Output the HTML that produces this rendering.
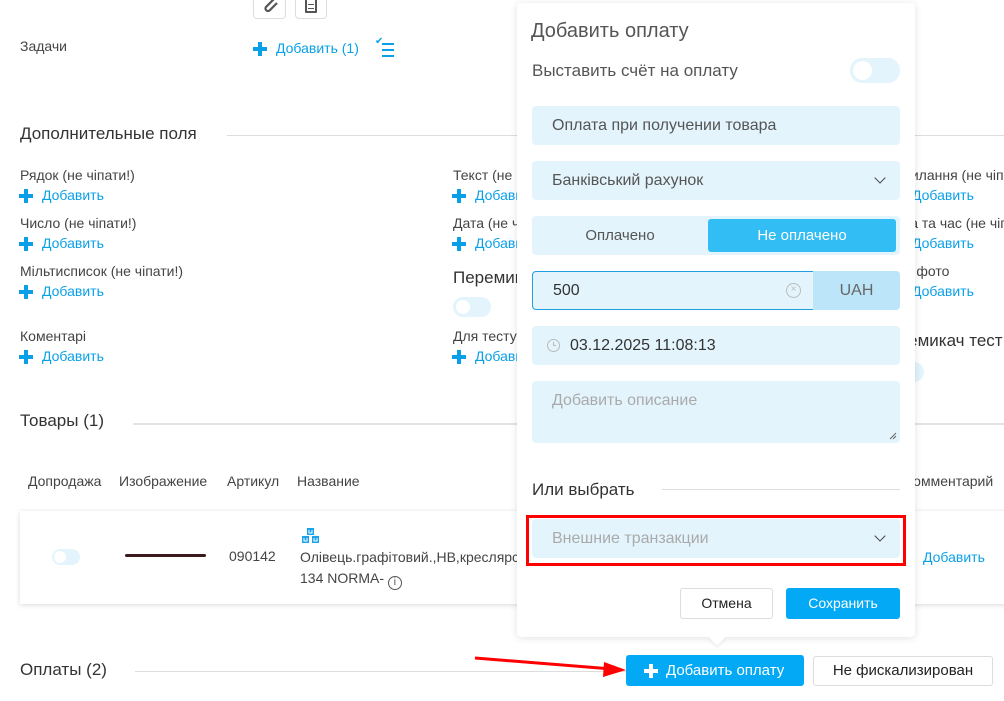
<!DOCTYPE html>
<html><head><meta charset="utf-8"><style>
*{box-sizing:border-box;margin:0;padding:0}
body{width:1004px;height:701px;overflow:hidden;background:#fff;font-family:"Liberation Sans",sans-serif;color:#444;position:relative;font-size:14px}
.a{position:absolute;white-space:nowrap}
.lbl{font-size:14px;color:#444}
.add{font-size:14px;color:#0aa0e8}
.plus{position:absolute;width:14px;height:14px}
.plus:before{content:"";position:absolute;left:5px;top:0;width:4px;height:14px;background:#0aa0e8}
.plus:after{content:"";position:absolute;left:0;top:5px;width:14px;height:4px;background:#0aa0e8}
.h{font-size:17px;color:#333}
.line{position:absolute;height:1px;background:#ddd}
.tog{position:absolute;border-radius:12px;background:#e3f4fd}
.tog i{position:absolute;border-radius:50%;background:#fff}
.pop{position:absolute;left:517px;top:3px;width:398px;height:634px;background:#fff;border-radius:4px;box-shadow:0 1px 8px rgba(0,0,0,.12);z-index:5}
.f{position:absolute;left:15px;width:368px;height:39px;background:#e3f4fd;border-radius:4px;font-size:16px;color:#555;padding:0 0 0 20px;line-height:39px}
.chev{position:absolute;right:16px;top:13px;width:8px;height:8px;border-right:1.3px solid #444;border-bottom:1.3px solid #444;transform:rotate(45deg)}
</style></head><body>
<div class="a" style="left:253px;top:-8px;width:33px;height:27px;border:1px solid #ddd;border-radius:4px"></div>
<svg class="a" style="left:259px;top:-6px" width="22" height="22" viewBox="0 0 22 22"><path d="M16 4 L7 13 a2.5 2.5 0 0 0 3.5 3.5 L18 9" fill="none" stroke="#555" stroke-width="2.2"/></svg>
<div class="a" style="left:295px;top:-8px;width:32px;height:27px;border:1px solid #ddd;border-radius:4px"></div>
<div class="a" style="left:305px;top:-4px;width:12px;height:17px;border:2px solid #555;border-radius:1px"></div>
<div class="a" style="left:308px;top:4px;width:6px;height:5px;border-top:1.5px solid #555;border-bottom:1.5px solid #555"></div>

<div class="a lbl" style="left:20px;top:38px">Задачи</div>
<div class="plus" style="left:253px;top:42px"></div>
<div class="a add" style="left:276px;top:40px">Добавить (1)</div>
<div class="a" style="left:375px;top:36px;color:#0aa0e8;font-size:10px">✔</div>
<div class="a" style="left:382px;top:43px;width:12px;height:14px;border-top:2px solid #0aa0e8;border-bottom:2px solid #0aa0e8"></div>
<div class="a" style="left:382px;top:49px;width:12px;height:2px;background:#0aa0e8"></div>

<div class="a h" style="left:20px;top:124px">Дополнительные поля</div>
<div class="line" style="left:227px;top:135px;width:777px"></div>

<div class="a lbl" style="left:20px;top:167px">Рядок (не чіпати!)</div>
<div class="plus" style="left:19px;top:189px"></div><div class="a add" style="left:42px;top:187px">Добавить</div>
<div class="a lbl" style="left:20px;top:215px">Число (не чіпати!)</div>
<div class="plus" style="left:19px;top:237px"></div><div class="a add" style="left:42px;top:235px">Добавить</div>
<div class="a lbl" style="left:20px;top:263px">Мільтисписок (не чіпати!)</div>
<div class="plus" style="left:19px;top:285px"></div><div class="a add" style="left:42px;top:283px">Добавить</div>
<div class="a lbl" style="left:20px;top:328px">Коментарі</div>
<div class="plus" style="left:19px;top:350px"></div><div class="a add" style="left:42px;top:348px">Добавить</div>

<div class="a lbl" style="left:453px;top:167px">Текст (не чіпати!)</div>
<div class="plus" style="left:452px;top:189px"></div><div class="a add" style="left:475px;top:187px">Добавить</div>
<div class="a lbl" style="left:453px;top:215px">Дата (не чіпати!)</div>
<div class="plus" style="left:452px;top:237px"></div><div class="a add" style="left:475px;top:235px">Добавить</div>
<div class="a h" style="left:453px;top:268px">Перемикач</div>
<div class="tog" style="left:453px;top:297px;width:38px;height:20px"><i style="left:3px;top:3px;width:14px;height:14px"></i></div>
<div class="a lbl" style="left:453px;top:328px">Для тесту</div>
<div class="plus" style="left:452px;top:350px"></div><div class="a add" style="left:475px;top:348px">Добавить</div>

<div class="a lbl" style="left:886px;top:167px">Посилання (не чіпати!)</div>
<div class="a add" style="left:912px;top:187px">Добавить</div>
<div class="a lbl" style="left:887px;top:215px">Дата та час (не чіпати!)</div>
<div class="a add" style="left:912px;top:235px">Добавить</div>
<div class="a lbl" style="left:889px;top:263px">Мої фото</div>
<div class="a add" style="left:912px;top:283px">Добавить</div>
<div class="a h" style="left:877px;top:331px">Перемикач тест</div>
<div class="tog" style="left:886px;top:362px;width:38px;height:20px"></div>

<div class="a h" style="left:20px;top:411px">Товары (1)</div>
<div class="line" style="left:133px;top:423px;width:871px;height:2px;background:#e3e3e3"></div>

<div class="a lbl" style="left:28px;top:473px">Допродажа</div>
<div class="a lbl" style="left:119px;top:473px">Изображение</div>
<div class="a lbl" style="left:227px;top:473px">Артикул</div>
<div class="a lbl" style="left:297px;top:473px">Название</div>
<div class="a lbl" style="left:905px;top:473px">Комментарий</div>

<div class="a" style="left:20px;top:511px;width:1000px;height:93px;background:#fff;box-shadow:0 1px 5px rgba(0,0,0,.15)"></div>
<div class="tog" style="left:52px;top:549px;width:28px;height:16px"><i style="left:2px;top:2px;width:12px;height:12px"></i></div>
<div class="a" style="left:125px;top:554px;width:81px;height:3px;background:#3a1a1a;border-radius:2px"></div>
<div class="a" style="left:229px;top:548px;font-size:14px;color:#444">090142</div>
<svg class="a" style="left:301px;top:527px" width="20" height="18" viewBox="0 0 20 18"><rect x="6" y="1" width="7" height="7" fill="#1aa3ec"/><rect x="1" y="9" width="7" height="7" fill="#1aa3ec"/><rect x="11" y="9" width="7" height="7" fill="#1aa3ec"/><path d="M8 3v3h3V3M3 11v3h3v-3M13 11v3h3v-3" fill="none" stroke="#fff" stroke-width="1"/></svg>
<div class="a lbl" style="left:300px;top:549px">Олівець.графітовий.,НВ,креслярський</div>
<div class="a lbl" style="left:300px;top:570px">134 NORMA- <span style="display:inline-block;width:14px;height:14px;border:1.3px solid #555;border-radius:50%;font-size:10px;text-align:center;line-height:12px;vertical-align:-2px">i</span></div>
<div class="a add" style="left:923px;top:549px">Добавить</div>

<div class="a h" style="left:20px;top:660px">Оплаты (2)</div>
<div class="line" style="left:135px;top:671px;width:491px"></div>

<div class="a" style="left:626px;top:655px;width:178px;height:31px;background:#03a9f4;border-radius:3px;color:#fff;font-size:15px;line-height:31px;padding-left:40px">Добавить оплату</div>
<div class="a" style="left:644px;top:664px;width:14px;height:14px"><div style="position:absolute;left:5px;top:0;width:4px;height:14px;background:#fff"></div><div style="position:absolute;left:0;top:5px;width:14px;height:4px;background:#fff"></div></div>
<div class="a" style="left:813px;top:656px;width:180px;height:30px;border:1px solid #ddd;border-radius:3px;color:#222;font-size:15px;line-height:28px;text-align:center">Не фискализирован</div>

<svg class="a" style="left:0;top:0;z-index:6" width="1004" height="701"><line x1="475" y1="658" x2="612" y2="669" stroke="#f00" stroke-width="3"/><polygon points="626,670 604,662 603,677" fill="#f00"/></svg>

<div class="pop">
<div class="a" style="left:194px;top:628px;width:12px;height:12px;background:#fff;transform:rotate(45deg);box-shadow:2px 2px 3px rgba(0,0,0,.06)"></div>
<div class="a" style="left:14px;top:17px;font-size:20px;color:#555">Добавить оплату</div>
<div class="a" style="left:15px;top:58px;font-size:17px;color:#555">Выставить счёт на оплату</div>
<div class="tog" style="left:333px;top:55px;width:50px;height:25px"><i style="left:3px;top:3px;width:19px;height:19px"></i></div>
<div class="f" style="top:103px">Оплата при получении товара</div>
<div class="f" style="top:158px">Банківський рахунок<div class="chev"></div></div>
<div class="f" style="top:213px;padding:0">
 <div class="a" style="left:0;width:176px;text-align:center;font-size:15px">Оплачено</div>
 <div class="a" style="left:176px;top:3px;width:188px;height:33px;background:#33bdf5;border-radius:3px;color:#fff;font-size:15px;text-align:center;line-height:33px">Не оплачено</div>
</div>
<div class="f" style="top:268px;width:282px;border:1px solid #1ea0e0;border-radius:4px 0 0 4px;line-height:37px;color:#333">500
 <div class="a" style="left:253px;top:11px;width:15px;height:15px;border:1.3px solid #bbb;border-radius:50%;font-size:10px;color:#bbb;line-height:12px;text-align:center">×</div></div>
<div class="a" style="left:296px;top:268px;width:87px;height:39px;background:#bde5fa;border-radius:0 4px 4px 0;text-align:center;line-height:39px;font-size:16px;color:#666">UAH</div>
<div class="f" style="top:323px;padding-left:38px;color:#333">03.12.2025 11:08:13
 <div class="a" style="left:15px;top:13px;width:13px;height:13px;border:1.3px solid #bbb;border-radius:50%"></div>
 <div class="a" style="left:21px;top:16px;width:3px;height:4px;border-left:1.2px solid #bbb;border-bottom:1.2px solid #bbb"></div>
</div>
<div class="f" style="top:378px;height:62px;line-height:1;padding-top:12px;color:#aaa">Добавить описание
 <svg class="a" style="right:3px;bottom:3px" width="8" height="8"><path d="M1 7L7 1M4 7L7 4" stroke="#666" stroke-width="1"/></svg></div>
<div class="a" style="left:15px;top:477px;font-size:17px;color:#333">Или выбрать</div>
<div class="line" style="left:145px;top:486px;width:238px"></div>
<div class="a" style="left:9px;top:512px;width:380px;height:51px;border:3px solid #f00"></div>
<div class="f" style="top:516px;color:#aaa">Внешние транзакции<div class="chev"></div></div>
<div class="a" style="left:163px;top:585px;width:93px;height:31px;border:1px solid #ddd;border-radius:3px;text-align:center;line-height:29px;font-size:14px;color:#222">Отмена</div>
<div class="a" style="left:269px;top:585px;width:114px;height:31px;background:#03a9f4;border-radius:3px;text-align:center;line-height:31px;font-size:14px;color:#fff">Сохранить</div>
</div>
</body></html>
